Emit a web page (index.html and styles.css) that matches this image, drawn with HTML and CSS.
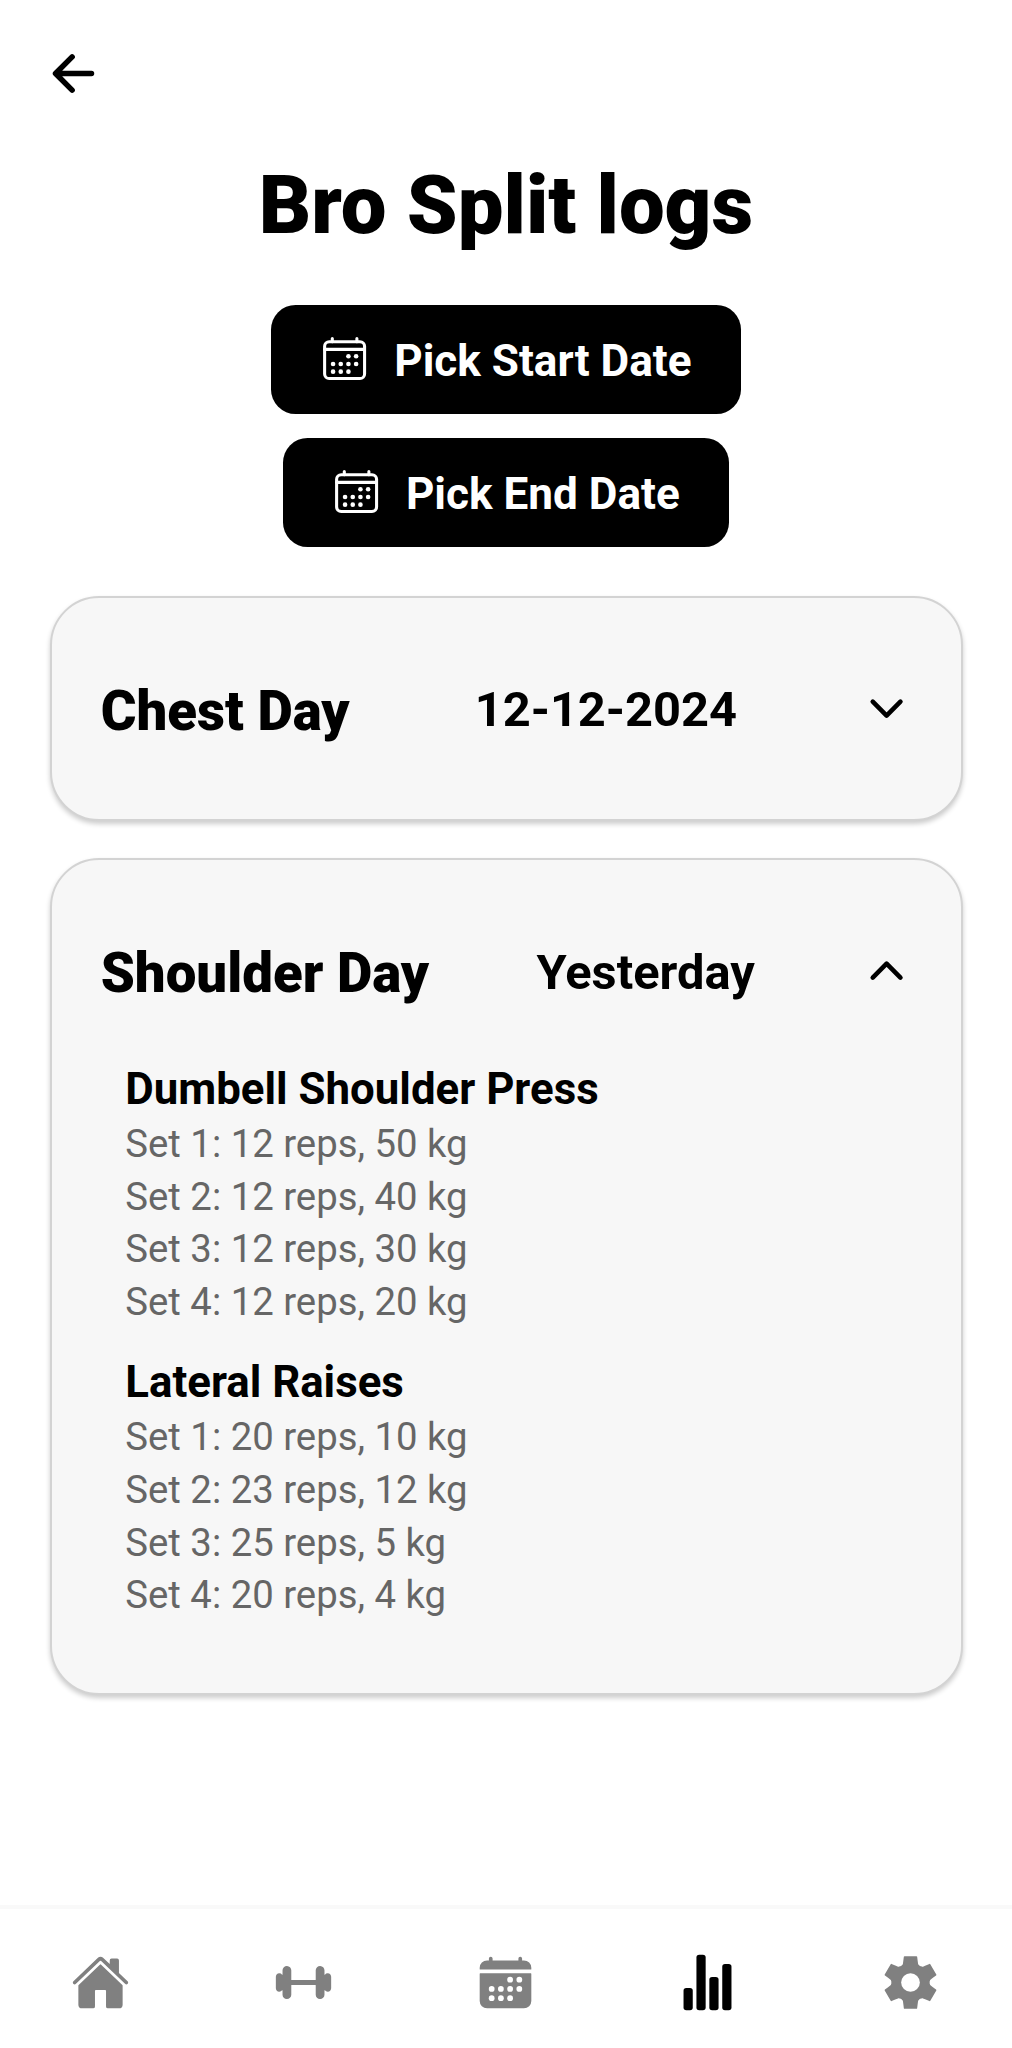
FILE: index.html
```html
<!DOCTYPE html>
<html lang="en">
<head>
<meta charset="utf-8">
<title>Bro Split logs</title>
<link rel="stylesheet" href="styles.css">
</head>
<body>
<svg class="defs" width="0" height="0">
  <symbol id="calendar-outline" viewBox="0 0 512 512">
    <g fill="none" stroke="currentColor" stroke-width="32" stroke-linejoin="round" stroke-linecap="round">
      <rect x="48" y="80" width="416" height="384" rx="48"/>
      <path d="M128 48v32M384 48v32M464 160H48"/>
    </g>
    <g fill="currentColor">
      <circle cx="296" cy="232" r="24"/><circle cx="376" cy="232" r="24"/>
      <circle cx="136" cy="312" r="24"/><circle cx="216" cy="312" r="24"/><circle cx="296" cy="312" r="24"/><circle cx="376" cy="312" r="24"/>
      <circle cx="136" cy="392" r="24"/><circle cx="216" cy="392" r="24"/><circle cx="296" cy="392" r="24"/>
    </g>
  </symbol>
</svg>
<div class="screen">
  <header class="topbar">
    <svg class="icon-lg" viewBox="0 0 512 512" fill="none" stroke="currentColor" stroke-width="48" stroke-linecap="round" stroke-linejoin="round"><path d="M244 400L100 256l144-144M120 256h292"/></svg>
  </header>
  <h1 class="title">Bro Split logs</h1>
  <div class="pickers">
    <button class="picker"><svg class="icon-md"><use href="#calendar-outline"/></svg><span class="picker-label">Pick Start Date</span></button>
    <button class="picker"><svg class="icon-md"><use href="#calendar-outline"/></svg><span class="picker-label">Pick End Date</span></button>
  </div>
  <main class="logs">
    <section class="card">
      <div class="card-head">
        <h2 class="day">Chest Day</h2>
        <span class="date">12-12-2024</span>
        <svg class="icon-md" viewBox="0 0 512 512" fill="none" stroke="currentColor" stroke-width="48" stroke-linecap="round" stroke-linejoin="round"><path d="M112 184l144 144 144-144"/></svg>
      </div>
    </section>
    <section class="card">
      <div class="card-head">
        <h2 class="day">Shoulder Day</h2>
        <span class="date">Yesterday</span>
        <svg class="icon-md" viewBox="0 0 512 512" fill="none" stroke="currentColor" stroke-width="48" stroke-linecap="round" stroke-linejoin="round"><path d="M112 328l144-144 144 144"/></svg>
      </div>
      <div class="exercises">
        <div class="exercise">
          <h3 class="name">Dumbell Shoulder Press</h3>
          <p class="set">Set 1: 12 reps, 50 kg</p>
          <p class="set">Set 2: 12 reps, 40 kg</p>
          <p class="set">Set 3: 12 reps, 30 kg</p>
          <p class="set">Set 4: 12 reps, 20 kg</p>
        </div>
        <div class="exercise">
          <h3 class="name">Lateral Raises</h3>
          <p class="set">Set 1: 20 reps, 10 kg</p>
          <p class="set">Set 2: 23 reps, 12 kg</p>
          <p class="set">Set 3: 25 reps, 5 kg</p>
          <p class="set">Set 4: 20 reps, 4 kg</p>
        </div>
      </div>
    </section>
  </main>
  <nav class="tabs">
    <a class="tab"><svg class="icon-lg" viewBox="0 0 512 512" fill="currentColor"><path d="M261.56 101.28a8 8 0 00-11.06 0L66.4 277.15a8 8 0 00-2.47 5.79L63.9 448a32 32 0 0032 32H192a16 16 0 0016-16V328a8 8 0 018-8h80a8 8 0 018 8v136a16 16 0 0016 16h96.06a32 32 0 0032-32V282.94a8 8 0 00-2.47-5.79z"/><path d="M490.91 244.15l-74.8-71.56V64a16 16 0 00-16-16h-48a16 16 0 00-16 16v32l-57.92-55.38C272.77 35.14 264.71 32 256 32c-8.68 0-16.72 3.14-22.14 8.63l-212.7 203.5c-6.22 6-7 15.87-1.34 22.37A16 16 0 0043 267.56L250.5 69.28a8 8 0 0111.06 0l207.52 198.28a16 16 0 0022.59-.44c6.14-6.36 5.63-16.86-.76-22.97z"/></svg></a>
    <a class="tab"><svg class="icon-lg" viewBox="0 0 512 512" fill="currentColor"><path d="M467 176a29.94 29.94 0 00-25.32 12.5 2 2 0 01-3.64-1.14V150.71c0-20.75-16.34-38.21-37.08-38.7A38 38 0 00362 150v82a2 2 0 01-2 2H152a2 2 0 01-2-2v-81.29c0-20.75-16.34-38.21-37.08-38.7A38 38 0 0074 150v37.38a2 2 0 01-3.64 1.14A29.94 29.94 0 0045 176c-16.3.51-29 14.31-29 30.62v98.72c0 16.31 12.74 30.11 29 30.62a29.94 29.94 0 0025.32-12.5 2 2 0 013.64 1.14v36.69c0 20.75 16.34 38.21 37.08 38.7A38 38 0 00150 362v-82a2 2 0 012-2h208a2 2 0 012 2v81.29c0 20.75 16.34 38.21 37.08 38.7A38 38 0 00438 362v-37.38a2 2 0 013.64-1.14A29.94 29.94 0 00467 336c16.3-.51 29-14.31 29-30.62v-98.72c0-16.31-12.74-30.15-29-30.66z"/></svg></a>
    <a class="tab"><svg class="icon-lg" viewBox="0 0 512 512" fill="currentColor"><path d="M480 128a64 64 0 00-64-64h-16V48.45c0-8.61-6.62-16-15.23-16.43A16 16 0 00368 48v16H144V48.45c0-8.61-6.62-16-15.23-16.43A16 16 0 00112 48v16H96a64 64 0 00-64 64v12a4 4 0 004 4h440a4 4 0 004-4zM32 416a64 64 0 0064 64h320a64 64 0 0064-64V179a3 3 0 00-3-3H35a3 3 0 00-3 3z"/><g fill="#fff"><circle cx="296" cy="232" r="25"/><circle cx="376" cy="232" r="25"/><circle cx="136" cy="312" r="25"/><circle cx="216" cy="312" r="25"/><circle cx="296" cy="312" r="25"/><circle cx="376" cy="312" r="25"/><circle cx="136" cy="392" r="25"/><circle cx="216" cy="392" r="25"/><circle cx="296" cy="392" r="25"/></g></svg></a>
    <a class="tab tab-active"><svg class="icon-lg" viewBox="0 0 512 512" fill="currentColor"><rect x="48" y="304" width="80" height="192" rx="24"/><rect x="160" y="16" width="80" height="480" rx="24"/><rect x="272" y="208" width="80" height="288" rx="24"/><rect x="384" y="96" width="80" height="400" rx="24"/></svg></a>
    <a class="tab"><svg class="icon-lg" viewBox="-88.5 -88.5 177 177" fill="currentColor"><defs><path id="tooth" d="M-26-51L-23-55Q-22-60-20-77Q-19.700-79-18-79H18Q19.700-79 20-77Q22-60 23-55L26-51L0 0z"/></defs><use href="#tooth"/><use href="#tooth" transform="rotate(60)"/><use href="#tooth" transform="rotate(120)"/><use href="#tooth" transform="rotate(180)"/><use href="#tooth" transform="rotate(240)"/><use href="#tooth" transform="rotate(300)"/><circle r="57.500"/><circle r="28" fill="#fff"/></svg></a>
  </nav>
</div>
</body>
</html>
```
FILE: styles.css
```css
* { box-sizing: border-box; margin: 0; padding: 0; }

body {
  background: #fff;
  color: #000;
  font-family: Roboto, "Liberation Sans", sans-serif;
}

.defs { display: block; height: 0; }

.screen {
  display: flex;
  flex-direction: column;
  height: 2048px;
}

.icon-lg { display: block; flex: none; width: 59px; height: 59px; }
.icon-md { display: block; flex: none; width: 49.2px; height: 49.2px; }

.topbar { padding: 44px 44px 0; }

.title {
  margin-top: 54px;
  font-size: 81.4px;
  font-weight: 900;
  line-height: 96px;
  text-align: center;
}

.pickers {
  display: flex;
  flex-direction: column;
  align-items: center;
  gap: 24px;
  margin-top: 51.5px;
}

.picker {
  display: flex;
  align-items: center;
  gap: 24.6px;
  height: 109px;
  padding: 0 49.2px;
  border: 0;
  border-radius: 24.6px;
  background: #000;
  color: #fff;
  font: 700 44.1px/52px Roboto, "Liberation Sans", sans-serif;
}

.picker-label { padding-top: 4px; }

.logs {
  display: flex;
  flex: 1;
  flex-direction: column;
  gap: 37px;
  margin-top: 49px;
  padding: 0 49.5px;
}

.card {
  padding: 49.2px;
  border: 2.46px solid #d3d3d3;
  border-radius: 49.2px;
  background: #f7f7f7;
  box-shadow: 0 3px 5px rgba(0, 0, 0, 0.2);
}

.card-head {
  display: flex;
  align-items: center;
  justify-content: space-between;
  height: 123px;
}

.day { padding-top: 5px; font-size: 54.6px; font-weight: 900; line-height: 64px; }
.date { padding-top: 4px; font-size: 48.8px; font-weight: 700; line-height: 58px; }

.exercises { padding: 29px 24.6px 0; }
.exercise { margin-bottom: 26px; }
.exercise:last-child { margin-bottom: 22.4px; }

.name { font-size: 43.8px; font-weight: 700; line-height: 57px; }
.set { color: #666; font-size: 38.3px; line-height: 52.6px; }

.tabs {
  display: flex;
  height: 143px;
  border-top: 4px solid #f9f9f9;
}

.tab {
  display: flex;
  flex: 1;
  align-items: center;
  justify-content: center;
  padding-top: 8px;
  padding-right: 1px;
  color: #808080;
}

.tab-active { color: #000; }
```
